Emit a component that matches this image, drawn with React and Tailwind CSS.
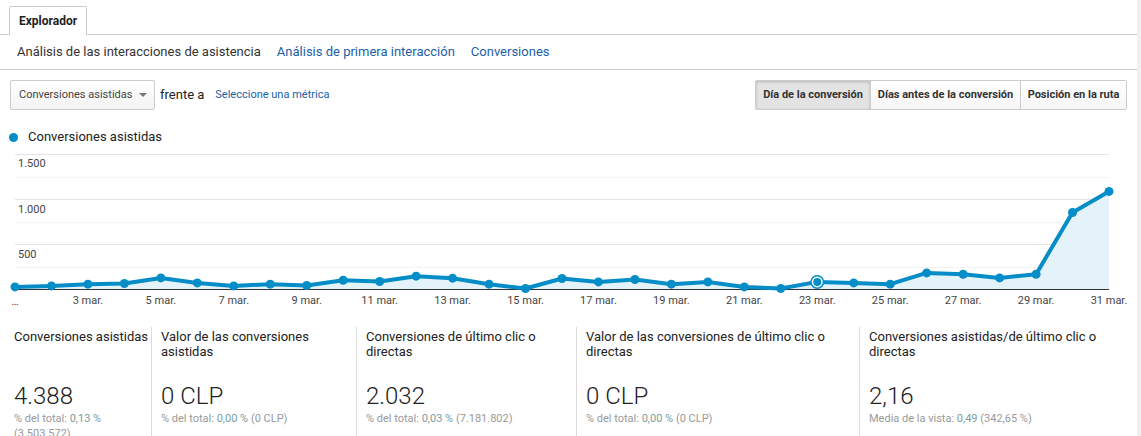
import React from 'react';

const FONT = { fontFamily: 'Roboto, "Liberation Sans", Arial, sans-serif' };

// asistidas por día, 1 a 31 de marzo
const daily = [
  29, 40, 59, 67, 129, 73, 40, 59, 44, 103, 89, 148, 126, 59, 11, 122, 84, 111, 59, 84, 29, 11, 84, 73, 59, 184,
  170, 129, 170, 856, 1090,
];

const scorecards = [
  {
    title: 'Conversiones asistidas',
    value: '4.388',
    label: '% del total:',
    pct: '0,13 %',
    rest: '(3.503.572)',
    width: 'w-[151px]',
    first: true,
  },
  {
    title: 'Valor de las conversiones asistidas',
    value: '0 CLP',
    label: '% del total:',
    pct: '0,00 %',
    rest: '(0 CLP)',
    width: 'w-[205px]',
  },
  {
    title: 'Conversiones de último clic o directas',
    value: '2.032',
    label: '% del total:',
    pct: '0,03 %',
    rest: '(7.181.802)',
    width: 'w-[220px]',
  },
  {
    title: 'Valor de las conversiones de último clic o directas',
    value: '0 CLP',
    label: '% del total:',
    pct: '0,00 %',
    rest: '(0 CLP)',
    width: 'w-[283px]',
  },
  {
    title: 'Conversiones asistidas/de último clic o directas',
    value: '2,16',
    label: 'Media de la vista:',
    pct: '0,49',
    rest: '(342,65 %)',
    width: 'flex-1',
  },
];

function Chart() {
  const x0 = 15;
  const x1 = 1109;
  const base = 144.5;
  const step = (x1 - x0) / (daily.length - 1);
  const pts = daily.map((v, i) => [x0 + i * step, base - v * 0.09]);
  const line = pts.map(([x, y]) => `${x.toFixed(1)},${y.toFixed(1)}`).join(' ');
  const area = `${x0},${base} ${line} ${x1},${base}`;
  const grid = [
    { y: 9.5, major: true },
    { y: 32.5 },
    { y: 54.5, major: true },
    { y: 77.5 },
    { y: 99.5, major: true },
    { y: 122.5 },
  ];
  const hover = 22;

  return (
    <svg width="1137" height="165" className="block shrink-0" style={FONT}>
      {grid.map((g) => (
        <line key={g.y} x1={x0} x2={x1} y1={g.y} y2={g.y} stroke={g.major ? '#e3e3e3' : '#f2f2f2'} strokeWidth="1" />
      ))}
      <text x="18" y="22" fontSize="11" fill="#444">1.500</text>
      <text x="18" y="68" fontSize="11" fill="#444">1.000</text>
      <text x="18" y="113" fontSize="11" fill="#444">500</text>
      <polygon points={area} fill="#e4f2fa" />
      <line x1={x0} x2={x1} y1={base} y2={base} stroke="#333" strokeWidth="1" />
      <polyline points={line} fill="none" stroke="#058dc7" strokeWidth="4" strokeLinejoin="round" />
      {pts.map(([x, y], i) =>
        i === hover ? (
          <g key={i}>
            <circle cx={x} cy={y} r="7" fill="#058dc7" />
            <circle cx={x} cy={y} r="5.5" fill="#fff" />
            <circle cx={x} cy={y} r="4" fill="#058dc7" />
          </g>
        ) : (
          <circle key={i} cx={x} cy={y} r="4.5" fill="#058dc7" />
        )
      )}
      <text x={x0} y="160" fontSize="11" fill="#444" textAnchor="middle">…</text>
      {pts.map(([x], i) =>
        i % 2 === 0 && i > 0 ? (
          <text key={i} x={x} y="159" fontSize="11" fill="#444" textAnchor="middle">
            {i + 1} mar.
          </text>
        ) : null
      )}
    </svg>
  );
}

export default function App() {
  return (
    <div className="flex w-[1141px] h-[436px] overflow-hidden bg-white text-[#222]" style={FONT}>
      <div className="w-[1137px] flex flex-col">
        <div className="shrink-0 h-[35px] pt-[6px] pl-[9px] border-b border-[#ccc] flex">
          <div className="h-[29px] -mb-px px-[9px] bg-white border border-b-0 border-[#ccc] rounded-t-[2px] text-[12px] font-bold leading-[28px]">
            Explorador
          </div>
        </div>

        <div className="shrink-0 h-[35px] pl-[17px] border-b border-[#ccc] flex items-center gap-4 text-[13px]">
          <span className="text-[#333]">Análisis de las interacciones de asistencia</span>
          <span className="text-[#1a5fa8]">Análisis de primera interacción</span>
          <span className="text-[#1a5fa8]">Conversiones</span>
        </div>

        <div className="shrink-0 pt-[10px] px-[10px] flex items-center">
          <div className="w-[145px] h-[30px] pl-[8px] pr-[7px] flex items-center justify-between border border-[#ccc] rounded-[2px] bg-gradient-to-b from-white to-[#f3f3f3] text-[11px] text-[#444]">
            <span>Conversiones asistidas</span>
            <span className="w-0 h-0 border-x-[4px] border-x-transparent border-t-[4px] border-t-[#777]" />
          </div>
          <span className="ml-[5px] text-[13px]">frente a</span>
          <span className="ml-[11px] text-[11px] text-[#1a5fa8]">Seleccione una métrica</span>
          <div className="ml-auto h-[30px] flex border border-[#ccc] rounded-[2px] text-[11px] font-bold text-[#333]">
            <span className="w-[114px] flex items-center justify-center bg-[#e3e3e3] shadow-[inset_0_1px_3px_rgba(0,0,0,0.2)]">
              Día de la conversión
            </span>
            <span className="w-[150px] flex items-center justify-center border-l border-[#ccc] bg-gradient-to-b from-white to-[#f6f6f6]">
              Días antes de la conversión
            </span>
            <span className="w-[106px] flex items-center justify-center border-l border-[#ccc] bg-gradient-to-b from-white to-[#f6f6f6]">
              Posición en la ruta
            </span>
          </div>
        </div>

        <div className="shrink-0 mt-[19px] h-[16px] pl-[9px] flex items-center gap-[10px] text-[13px]">
          <span className="w-[9px] h-[9px] rounded-full bg-[#058dc7]" />
          <span>Conversiones asistidas</span>
        </div>

        <Chart />

        <div className="shrink-0 flex pt-[17px] h-[140px]">
          {scorecards.map((c) => (
            <div
              key={c.title}
              className={`${c.width} ${c.first ? 'pl-[14px]' : 'pl-[9px] border-l border-[#ddd]'} pr-[6px] pt-[2px]`}
            >
              <div className={`h-[30px] text-[13px] leading-[15px] text-[#222] ${c.first ? 'whitespace-nowrap' : ''}`}>
                {c.title}
              </div>
              <div className="mt-[23px] text-[24px] leading-[28px] font-light text-[#222]">{c.value}</div>
              <div className="mt-[1px] text-[11px] leading-[15px] text-[#999]">
                {c.label} <span className="text-[#7a9e9f]">{c.pct}</span> {c.rest}
              </div>
            </div>
          ))}
        </div>
      </div>
      <div className="w-[4px] bg-[#f1f1f1]" />
    </div>
  );
}
